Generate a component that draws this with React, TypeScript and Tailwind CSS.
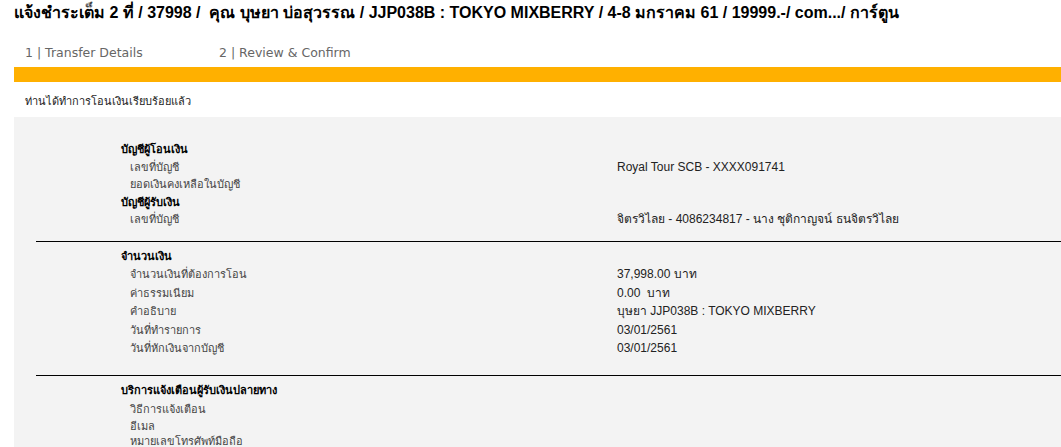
type Row = { label: string; value?: string; h?: number };
type Section = { title: string; rows: Row[]; heading?: string }[];

const font = "font-['Liberation_Sans',Tahoma,sans-serif]";

function Block({ groups, pitch }: { groups: Section; pitch: string }) {
  return (
    <div className="pl-[85px]">
      {groups.map((g) => (
        <div key={g.title}>
          <div className={`text-[11px] font-bold text-black ${pitch}`}>{g.title}</div>
          {g.rows.map((r, i) => (
            <div key={i} className={`grid grid-cols-[496px_1fr] items-center ${pitch}`}>
              <span className="pl-[9px] text-[11px] text-[#444]">{r.label}</span>
              <span className="whitespace-pre text-[12px] text-[#222]">{r.value ?? ""}</span>
            </div>
          ))}
        </div>
      ))}
    </div>
  );
}

export default function App() {
  const s1: Section = [
    {
      title: "บัญชีผู้โอนเงิน",
      rows: [
        { label: "เลขที่บัญชี", value: "Royal Tour SCB - XXXX091741" },
        { label: "ยอดเงินคงเหลือในบัญชี" },
      ],
    },
    {
      title: "บัญชีผู้รับเงิน",
      rows: [{ label: "เลขที่บัญชี", value: "จิตรวิไลย - 4086234817 - นาง ชุติกาญจน์ ธนจิตรวิไลย" }],
    },
  ];

  const s2: Section = [
    {
      title: "จำนวนเงิน",
      rows: [
        { label: "จำนวนเงินที่ต้องการโอน", value: "37,998.00 บาท" },
        { label: "ค่าธรรมเนียม", value: "0.00  บาท" },
        { label: "คำอธิบาย", value: "บุษยา JJP038B : TOKYO MIXBERRY" },
        { label: "วันที่ทำรายการ", value: "03/01/2561" },
        { label: "วันที่หักเงินจากบัญชี", value: "03/01/2561" },
      ],
    },
  ];

  return (
    <div className={`min-h-screen bg-white ${font}`}>
      <h1 className="pl-[14px] text-[16px] font-bold leading-[26px] text-black whitespace-nowrap">
        แจ้งชำระเต็ม 2 ที่ / 37998 /&nbsp; คุณ บุษยา บ่อสุวรรณ / JJP038B : TOKYO MIXBERRY / 4-8 มกราคม 61 / 19999.-/ com.../ การ์ตูน
      </h1>

      {/* steps */}
      <div className="flex h-[41px] pl-[25px] pt-[18px] font-['DejaVu_Sans',Verdana,sans-serif] text-[12.5px] leading-[18px] text-[#666]">
        <span className="w-[194px]">1 | Transfer Details</span>
        <span>2 | Review &amp; Confirm</span>
      </div>
      <div className="ml-[14px] h-[15px] bg-[#ffb000]" />

      <div className="h-[35px] pl-[25px] pt-[10px] text-[11px] leading-[18px] text-[#222]">
        ท่านได้ทำการโอนเงินเรียบร้อยแล้ว
      </div>

      <div className="ml-[14px] bg-[#f3f3f3] pl-[22px] pt-[24px] pb-[20px]">
        <Block groups={s1} pitch="h-[17.5px] leading-[17.5px]" />
        <div className="mt-[12px] border-t border-black" />

        <div className="mt-[5px]">
          <Block groups={s2} pitch="h-[18.6px] leading-[18.6px]" />
        </div>
        <div className="mt-[17px] border-t border-black" />

        <div className="mt-[5px] pl-[85px] text-[11px]">
          <div className="h-[19px] font-bold leading-[18px] text-black">บริการแจ้งเตือนผู้รับเงินปลายทาง</div>
          <div className="h-[17px] pl-[9px] leading-[18px] text-[#444]">วิธีการแจ้งเตือน</div>
          <div className="h-[15px] pl-[9px] leading-[18px] text-[#444]">อีเมล</div>
          <div className="h-[15px] pl-[9px] leading-[18px] text-[#444]">หมายเลขโทรศัพท์มือถือ</div>
        </div>
      </div>
    </div>
  );
}
